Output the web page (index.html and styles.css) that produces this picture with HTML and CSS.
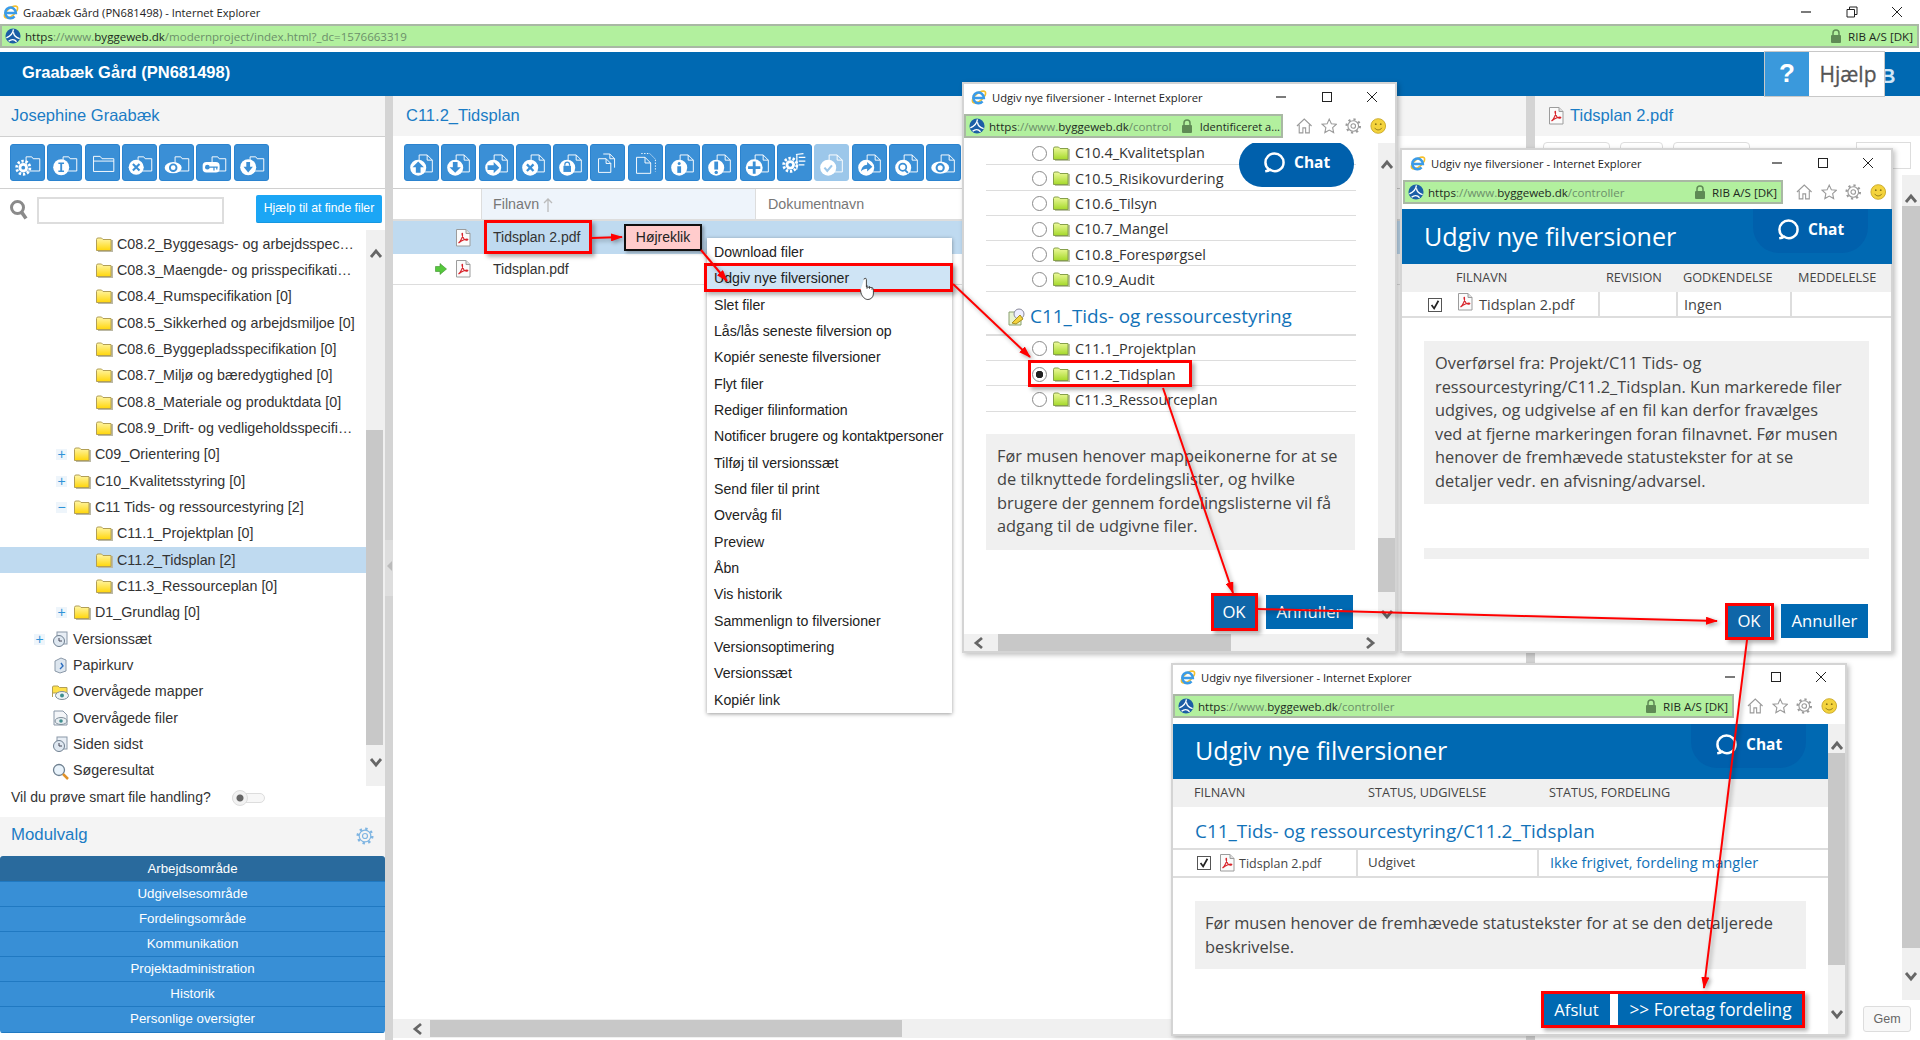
FILE: index.html
```html
<!DOCTYPE html>
<html lang="da">
<head>
<meta charset="utf-8">
<title>Graabæk Gård (PN681498) - Internet Explorer</title>
<link rel="stylesheet" href="styles.css">
</head>
<body>
<svg class="defs" aria-hidden="true">
  <defs>
    <linearGradient id="gy" x1="0" y1="0" x2="0" y2="1"><stop offset="0" stop-color="#fff6a8"/><stop offset="1" stop-color="#ffd60a"/></linearGradient>
    <linearGradient id="gg" x1="0" y1="0" x2="0" y2="1"><stop offset="0" stop-color="#eefa9c"/><stop offset="1" stop-color="#a5d92a"/></linearGradient>
    <marker id="ah" viewBox="0 0 12 8" refX="11" refY="4" markerWidth="12" markerHeight="8" markerUnits="userSpaceOnUse" orient="auto"><path d="M0 0L12 4L0 8z" fill="#f00"/></marker>
    <symbol id="ie" viewBox="0 0 18 18"><ellipse cx="9" cy="9" rx="9" ry="4.200" transform="rotate(-40 9 9)" fill="none" stroke="#f5c02c" stroke-width="1.800"/><path d="M3.500 10h11a6 6 0 1 0-1.500 4" fill="none" stroke="#3a9be8" stroke-width="2.800"/></symbol>
    <symbol id="bw" viewBox="0 0 18 18"><circle cx="9" cy="9" r="8.500" fill="#1c5ea6"/><path d="M9.500 1.500C9 6 6 9 1.500 11M9.500 5C10 9 12.500 11 16.500 12M4 15C7 12.500 10.500 12.500 13 15.500" fill="none" stroke="#fff" stroke-width="1.500"/></symbol>
    <symbol id="lock" viewBox="0 0 12 14"><rect x="1" y="6" width="10" height="8" rx="1" fill="#5f8a55"/><path d="M3 6.500V4a3 3 0 0 1 6 0v2.500" fill="none" stroke="#5f8a55" stroke-width="1.500"/></symbol>
    <symbol id="home" viewBox="0 0 18 18"><path d="M1 9L9 1.500L17 9M3.500 7.500V16.500H7.500V11H10.500V16.500H14.500V7.500" fill="none" stroke="#9a9a9a" stroke-width="1.200"/></symbol>
    <symbol id="star" viewBox="0 0 18 18"><path d="M9 1.500L11.300 6.500L16.800 7.100L12.700 10.800L13.800 16.200L9 13.500L4.200 16.200L5.300 10.800L1.200 7.100L6.700 6.500Z" fill="none" stroke="#9a9a9a" stroke-width="1.200"/></symbol>
    <symbol id="gear" viewBox="0 0 18 18"><circle cx="9" cy="9" r="5.800" fill="none" stroke="currentColor" stroke-width="1.200"/><circle cx="9" cy="9" r="7.300" fill="none" stroke="currentColor" stroke-width="2.400" stroke-dasharray="2.400 3.330"/><circle cx="9" cy="9" r="2.500" fill="none" stroke="currentColor" stroke-width="1.200"/></symbol>
    <symbol id="smile" viewBox="0 0 18 18"><circle cx="9" cy="9" r="8" fill="#f4d33c" stroke="#c9a92a"/><circle cx="6.300" cy="7" r="1" fill="#8a7415"/><circle cx="11.700" cy="7" r="1" fill="#8a7415"/><path d="M5 11c2 3 6 3 8 0" fill="none" stroke="#8a7415"/></symbol>
    <symbol id="chat" viewBox="0 0 22 22"><path d="M5 18C3 16.500 1.500 14 1.500 11A9 9 0 0 1 20.500 11A9 9 0 0 1 6.500 18.500C5 19.800 3.500 20.300 1.500 20.300C3.500 19.500 4.500 19 5 18Z" fill="none" stroke="#fff" stroke-width="2.600"/></symbol>
    <symbol id="pdf" viewBox="0 0 16 18"><path d="M1.500.5h9.500l4 4v12.500h-13.500z" fill="#fbfbfb" stroke="#9c9c9c"/><path d="M11 .5v4h4" fill="#ddd" stroke="#9c9c9c"/><path d="M3.500 14C6.500 11.500 8 7 7.500 4.500C7 3.500 6.300 6 9 10C10 11.500 13 11.300 12.800 10.300C12.300 9.300 7.500 10.500 3.500 14Z" fill="none" stroke="#d8232a" stroke-width="1.100"/></symbol>
    <symbol id="fy" viewBox="0 0 17 17"><rect x="2" y="4" width="15" height="12" fill="#bcb9a4"/><path d="M.5 5V3.500Q.5 2 2 2h3.500L7 3.500H15V14.500H.5Z" fill="url(#gy)" stroke="#b29f55"/></symbol>
    <symbol id="fg" viewBox="0 0 17 17"><rect x="2" y="4" width="15" height="12" fill="#bdc4a8"/><path d="M.5 5V3.500Q.5 2 2 2h3.500L7 3.500H15V14.500H.5Z" fill="url(#gg)" stroke="#86a04a"/></symbol>
    <symbol id="up" viewBox="0 0 14 14"><path d="M2 10L7 4L12 10" fill="none" stroke="#666" stroke-width="2.800"/></symbol>
    <symbol id="dn" viewBox="0 0 14 14"><path d="M2 4L7 10L12 4" fill="none" stroke="#666" stroke-width="2.800"/></symbol>
    <symbol id="lf" viewBox="0 0 14 14"><path d="M10 2L4 7L10 12" fill="none" stroke="#666" stroke-width="2.800"/></symbol>
    <symbol id="rt" viewBox="0 0 14 14"><path d="M4 2L10 7L4 12" fill="none" stroke="#666" stroke-width="2.800"/></symbol>
    <symbol id="tdoc" viewBox="0 0 35 37"><path d="M15 10.500h8.500l5.500 5.500v12.500H15z" fill="none" stroke="#fff"/><path d="M23.500 10.500V16H29" fill="none" stroke="#fff"/></symbol>
    <symbol id="tfol" viewBox="0 0 35 37"><path d="M16 12.500h6l1.500 2H30.500V27.500H16z" fill="none" stroke="#fff"/></symbol>
  </defs>
</svg>

<header class="titlebar">
  <svg class="ico16"><use href="#ie"/></svg>
  <span class="title-text main-title">Graabæk Gård (PN681498) - Internet Explorer</span>
  <div class="ctrls">
    <span class="ctrl"><svg class="ctrl-i" viewBox="0 0 12 12"><path d="M1 6H11" stroke="#222" stroke-width="1.200"/></svg></span>
    <span class="ctrl"><svg class="ctrl-i" viewBox="0 0 12 12"><path d="M1 3.500H8.500V11H1ZM3.500 3.500V1H11V8.500H8.500" fill="none" stroke="#222"/></svg></span>
    <span class="ctrl"><svg class="ctrl-i" viewBox="0 0 12 12"><path d="M1 1L11 11M11 1L1 11" stroke="#222"/></svg></span>
  </div>
</header>
<div class="addr addr-main">
  <svg class="ico16"><use href="#bw"/></svg>
  <span class="url"><b>https</b>://www.<b>byggeweb.dk</b>/modernproject/index.html?_dc=1576663319</span>
  <svg class="lock"><use href="#lock"/></svg>
  <span class="cert">RIB A/S [DK]</span>
</div>
<div class="app-head">
  <h1 class="app-title">Graabæk Gård (PN681498)</h1>
  <div class="help"><span class="help-q">?</span><span class="help-t">Hjælp</span></div>
  <span class="logo-b">B</span>
</div>

<main class="main">
  <aside class="side">
    <div class="band side-band">Josephine Graabæk</div>
    <div class="toolbar side-tools">
      <span class="tb"><svg viewBox="0 0 35 37"><use href="#tfol"/><circle cx="13" cy="24" r="7" fill="none" stroke="#fff" stroke-width="3" stroke-dasharray="2.500 1.900"/><circle cx="13" cy="24" r="5" fill="#fff"/><circle cx="13" cy="24" r="2" fill="#3a8fd6"/></svg></span>
      <span class="tb"><svg viewBox="0 0 35 37"><use href="#tfol"/><circle cx="14" cy="23.500" r="8.500" fill="#fff"/><path d="M11 18.500h6v1.500h-2v7h2v1.500h-6V27h2v-7h-2z" fill="#3a8fd6"/></svg></span>
      <span class="tb"><svg viewBox="0 0 35 37"><path d="M8 12h7l2 2.500h12.500V28H8z" fill="none" stroke="#fff"/><path d="M8 17H29.500" stroke="#fff"/></svg></span>
      <span class="tb"><svg viewBox="0 0 35 37"><use href="#tfol"/><circle cx="14" cy="23.500" r="8" fill="#fff"/><path d="M10.500 20L17.500 27M17.500 20L10.500 27" stroke="#3a8fd6" stroke-width="2.200"/></svg></span>
      <span class="tb"><svg viewBox="0 0 35 37"><use href="#tfol"/><ellipse cx="14" cy="24" rx="9" ry="6" fill="#fff"/><circle cx="14" cy="24" r="3.500" fill="none" stroke="#3a8fd6" stroke-width="2"/></svg></span>
      <span class="tb"><svg viewBox="0 0 35 37"><use href="#tfol"/><rect x="6" y="18" width="18" height="11" rx="4" fill="#fff"/><circle cx="11" cy="23.500" r="2.500" fill="#3a8fd6"/><path d="M13 23.500H22M18 23.500V27M21 23.500V26" stroke="#3a8fd6" stroke-width="1.300"/></svg></span>
      <span class="tb"><svg viewBox="0 0 35 37"><use href="#tfol"/><circle cx="14" cy="23.500" r="8.500" fill="#fff"/><path d="M12 18h4v5h3l-5 6-5-6h3z" fill="#3a8fd6"/></svg></span>
    </div>
    <div class="search-row">
      <svg class="search-i" viewBox="0 0 18 20"><circle cx="7.500" cy="7.500" r="6" fill="none" stroke="#8a8a8a" stroke-width="3"/><path d="M11.500 12L16 18.500" stroke="#8a8a8a" stroke-width="3.600"/></svg>
      <span class="search-in"></span>
      <span class="search-btn">Hjælp til at finde filer</span>
    </div>
    <div class="tree-wrap">
      <ul class="tree">
        <li class="node l2"><svg class="fi"><use href="#fy"/></svg>C08.2_Byggesags- og arbejdsspec…</li>
        <li class="node l2"><svg class="fi"><use href="#fy"/></svg>C08.3_Maengde- og prisspecifikati…</li>
        <li class="node l2"><svg class="fi"><use href="#fy"/></svg>C08.4_Rumspecifikation [0]</li>
        <li class="node l2"><svg class="fi"><use href="#fy"/></svg>C08.5_Sikkerhed og arbejdsmiljoe [0]</li>
        <li class="node l2"><svg class="fi"><use href="#fy"/></svg>C08.6_Byggepladsspecifikation [0]</li>
        <li class="node l2"><svg class="fi"><use href="#fy"/></svg>C08.7_Miljø og bæredygtighed [0]</li>
        <li class="node l2"><svg class="fi"><use href="#fy"/></svg>C08.8_Materiale og produktdata [0]</li>
        <li class="node l2"><svg class="fi"><use href="#fy"/></svg>C08.9_Drift- og vedligeholdsspecifi…</li>
        <li class="node l1"><span class="tog">+</span><svg class="fi"><use href="#fy"/></svg>C09_Orientering [0]</li>
        <li class="node l1"><span class="tog">+</span><svg class="fi"><use href="#fy"/></svg>C10_Kvalitetsstyring [0]</li>
        <li class="node l1"><span class="tog">−</span><svg class="fi"><use href="#fy"/></svg>C11 Tids- og ressourcestyring [2]</li>
        <li class="node l2"><svg class="fi"><use href="#fy"/></svg>C11.1_Projektplan [0]</li>
        <li class="node l2 sel"><svg class="fi"><use href="#fy"/></svg>C11.2_Tidsplan [2]</li>
        <li class="node l2"><svg class="fi"><use href="#fy"/></svg>C11.3_Ressourceplan [0]</li>
        <li class="node l1"><span class="tog">+</span><svg class="fi"><use href="#fy"/></svg>D1_Grundlag [0]</li>
        <li class="node l0"><span class="tog">+</span><svg class="fi" viewBox="0 0 17 17"><rect x="5" y="1" width="10" height="12" fill="#e8eef5" stroke="#8a98a8"/><circle cx="7" cy="10" r="5.500" fill="#dfe8f1" stroke="#6f7f90"/><path d="M7 7V10H10" fill="none" stroke="#445"/></svg>Versionssæt</li>
        <li class="node l0"><svg class="fi" viewBox="0 0 17 17"><path d="M3 4L9 1L14 3V14L8 16L3 14Z" fill="#dde6ef" stroke="#8a98a8"/><path d="M9 6L11 9L8 12" fill="none" stroke="#2e6fc0" stroke-width="1.400"/></svg>Papirkurv</li>
        <li class="node l0"><svg class="fi" viewBox="0 0 17 17"><path d="M.5 13V3Q.5 2 2 2h4l1.500 1.500H15V9H.5Z" fill="#ffe14a" stroke="#b29f55"/><ellipse cx="10" cy="11.500" rx="6.500" ry="4" fill="#eef3f6" stroke="#7f8e9a"/><circle cx="10" cy="11.500" r="2" fill="#3f8f8f"/></svg>Overvågede mapper</li>
        <li class="node l0"><svg class="fi" viewBox="0 0 17 17"><path d="M2 1H11L15 5V15H2Z" fill="#f3f5f8" stroke="#8a98a8"/><ellipse cx="9" cy="11" rx="6" ry="3.500" fill="#e8eef2" stroke="#7f8e9a"/><circle cx="9" cy="11" r="1.800" fill="#3f8f8f"/></svg>Overvågede filer</li>
        <li class="node l0"><svg class="fi" viewBox="0 0 17 17"><rect x="5" y="1" width="10" height="12" fill="#e8eef5" stroke="#8a98a8"/><circle cx="7" cy="10" r="5.500" fill="#dfe8f1" stroke="#6f7f90"/><path d="M7 7V10H10" fill="none" stroke="#445"/></svg>Siden sidst</li>
        <li class="node l0"><svg class="fi" viewBox="0 0 17 17"><circle cx="7" cy="7" r="5.500" fill="#e9f3fb" stroke="#6f8090" stroke-width="1.300"/><path d="M11 11L16 16" stroke="#e0922a" stroke-width="2.500"/></svg>Søgeresultat</li>
      </ul>
      <div class="vbar tree-bar">
        <svg class="arrow"><use href="#up"/></svg>
        <span class="track"><span class="thumb thumb-tree"></span></span>
        <svg class="arrow"><use href="#dn"/></svg>
      </div>
    </div>
    <div class="smart"><span>Vil du prøve smart file handling?</span><span class="switch"><span class="knob"></span></span></div>
    <div class="band mod-band"><span>Modulvalg</span><svg class="mod-gear"><use href="#gear"/></svg></div>
    <nav class="modules">
      <a class="mod cur">Arbejdsområde</a>
      <a class="mod">Udgivelsesområde</a>
      <a class="mod">Fordelingsområde</a>
      <a class="mod">Kommunikation</a>
      <a class="mod">Projektadministration</a>
      <a class="mod">Historik</a>
      <a class="mod">Personlige oversigter</a>
    </nav>
  </aside>

  <div class="split"><span class="split-h"></span></div>

  <section class="center">
    <div class="band center-band">C11.2_Tidsplan</div>
    <div class="toolbar center-tools">
      <span class="tb"><svg viewBox="0 0 35 37"><use href="#tdoc"/><circle cx="14" cy="24" r="8.500" fill="#fff"/><path d="M14 17.500l6 6h-3.500v6h-5v-6H8z" fill="#3a8fd6"/></svg></span>
      <span class="tb"><svg viewBox="0 0 35 37"><use href="#tdoc"/><circle cx="14" cy="24" r="8.500" fill="#fff"/><path d="M11.500 18h5v5.500H20l-6 6-6-6h3.500z" fill="#3a8fd6"/></svg></span>
      <span class="tb"><svg viewBox="0 0 35 37"><use href="#tdoc"/><circle cx="14" cy="24" r="8.500" fill="#fff"/><path d="M20.500 24l-6 6v-3.500H8v-5h6.500V18z" fill="#3a8fd6"/></svg></span>
      <span class="tb"><svg viewBox="0 0 35 37"><use href="#tdoc"/><circle cx="14" cy="24" r="8.500" fill="#fff"/><path d="M10.500 20.500l7 7M17.500 20.500l-7 7" stroke="#3a8fd6" stroke-width="2.400"/></svg></span>
      <span class="tb"><svg viewBox="0 0 35 37"><use href="#tdoc"/><circle cx="14" cy="24" r="8.500" fill="#fff"/><rect x="10" y="22" width="8" height="6.500" fill="#3a8fd6"/><path d="M11.500 22v-1.500a2.500 2.500 0 0 1 5 0V22" fill="none" stroke="#3a8fd6" stroke-width="1.300"/></svg></span>
      <span class="tb"><svg viewBox="0 0 35 37"><path d="M13 9.500h7l5 5V24M8 14.500h8l5 5V29H8z" fill="none" stroke="#fff"/><path d="M16 14.500v5h5M20 9.500v5h5" fill="none" stroke="#fff"/></svg></span>
      <span class="tb"><svg viewBox="0 0 35 37"><path d="M8 13h9l6 6v11H8zM17 13v6h6" fill="none" stroke="#fff"/><path d="M13 9h9l6 6v13" fill="none" stroke="#fff" stroke-dasharray="1.500 1.500"/></svg></span>
      <span class="tb"><svg viewBox="0 0 35 37"><use href="#tdoc"/><circle cx="14" cy="24" r="8.500" fill="#fff"/><circle cx="14" cy="19.500" r="1.600" fill="#3a8fd6"/><rect x="12" y="22.500" width="4" height="7" fill="#3a8fd6"/></svg></span>
      <span class="tb"><svg viewBox="0 0 35 37"><use href="#tdoc"/><circle cx="14" cy="24" r="8.500" fill="#fff"/><rect x="12" y="17.500" width="4" height="8.500" fill="#3a8fd6"/><circle cx="14" cy="29" r="1.800" fill="#3a8fd6"/></svg></span>
      <span class="tb"><svg viewBox="0 0 35 37"><use href="#tdoc"/><circle cx="14" cy="24" r="9" fill="#fff"/><path d="M7.500 24h13M14 17.500v13" stroke="#3a8fd6" stroke-width="3"/></svg></span>
      <span class="tb"><svg viewBox="0 0 35 37"><path d="M19 10l8-1M22 13h7M22 17h7M22 21h6M20 10V26" fill="none" stroke="#fff" stroke-width="1.300"/><circle cx="13" cy="21" r="7" fill="none" stroke="#fff" stroke-width="3" stroke-dasharray="2.500 1.900"/><circle cx="13" cy="21" r="5" fill="#fff"/><circle cx="13" cy="21" r="2" fill="#3a8fd6"/></svg></span>
      <span class="tb off"><svg viewBox="0 0 35 37"><use href="#tdoc"/><circle cx="14" cy="24" r="8.500" fill="#fff"/><path d="M10 24l3 3.500 5-6" fill="none" stroke="#9cc7ea" stroke-width="2.200"/></svg></span>
      <span class="tb"><svg viewBox="0 0 35 37"><use href="#tdoc"/><circle cx="14" cy="24" r="8.500" fill="#fff"/><path d="M15 18l5.500 5-5.500 5v-3c-3 0-5 1-6.500 3 .5-4 3-7 6.500-7z" fill="#3a8fd6"/></svg></span>
      <span class="tb"><svg viewBox="0 0 35 37"><use href="#tdoc"/><circle cx="14" cy="24" r="8.500" fill="#fff"/><circle cx="13.500" cy="23.500" r="3.800" fill="none" stroke="#3a8fd6" stroke-width="1.800"/><path d="M16 26.500l3 3" stroke="#3a8fd6" stroke-width="2"/></svg></span>
      <span class="tb"><svg viewBox="0 0 35 37"><use href="#tdoc"/><ellipse cx="14" cy="24" rx="9.500" ry="6.500" fill="#fff"/><circle cx="14" cy="24" r="3.800" fill="none" stroke="#3a8fd6" stroke-width="2.200"/></svg></span>
    </div>
    <div class="thead">
      <span class="th th0"></span>
      <span class="th th1">Filnavn <svg class="sort" viewBox="0 0 10 14"><path d="M5 14V1M1 5L5 1L9 5" fill="none" stroke="#bbb" stroke-width="1.300"/></svg></span>
      <span class="th th2">Dokumentnavn</span>
    </div>
    <div class="trow sel">
      <span class="td0"><svg class="pdf"><use href="#pdf"/></svg></span><span class="td1">Tidsplan 2.pdf</span>
    </div>
    <div class="trow">
      <span class="td0"><svg class="green" viewBox="0 0 12 12"><path d="M5 .5L11.500 6L5 11.500V8.500H.5v-5H5z" fill="#55c83c" stroke="#3d8f2b" stroke-width=".6"/></svg><svg class="pdf"><use href="#pdf"/></svg></span><span class="td1">Tidsplan.pdf</span>
    </div>
    <div class="hbar center-h">
      <svg class="arrow-h"><use href="#lf"/></svg>
      <span class="hthumb"></span>
    </div>
  </section>

  <div class="split split2"></div>

  <section class="right">
    <div class="band right-band"><svg class="pdf-big"><use href="#pdf"/></svg>Tidsplan 2.pdf</div>
    <div class="rp-tabs"><span class="rp-tab t1"></span><span class="rp-tab t2"></span><span class="rp-tab t3"></span><span class="rp-box"></span></div>
    <div class="rp-body">
      <div class="vbar rp-bar">
        <svg class="arrow"><use href="#up"/></svg>
        <span class="track"><span class="thumb thumb-rp"></span></span>
        <svg class="arrow"><use href="#dn"/></svg>
      </div>
    </div>
    <div class="rp-foot"><span class="gem">Gem</span></div>
  </section>
</main>

<!-- context menu -->
<ul class="ctx">
  <li>Download filer</li>
  <li class="hot">Udgiv nye filversioner</li>
  <li>Slet filer</li>
  <li>Lås/lås seneste filversion op</li>
  <li>Kopiér seneste filversioner</li>
  <li>Flyt filer</li>
  <li>Rediger filinformation</li>
  <li>Notificer brugere og kontaktpersoner</li>
  <li>Tilføj til versionssæt</li>
  <li>Send filer til print</li>
  <li>Overvåg fil</li>
  <li>Preview</li>
  <li>Åbn</li>
  <li>Vis historik</li>
  <li>Sammenlign to filversioner</li>
  <li>Versionsoptimering</li>
  <li>Versionssæt</li>
  <li>Kopiér link</li>
</ul>

<!-- popup A -->
<article class="win win-a">
  <div class="w-title">
    <svg class="ico16"><use href="#ie"/></svg>
    <span class="title-text">Udgiv nye filversioner - Internet Explorer</span>
    <div class="ctrls">
      <span class="ctrl"><svg class="ctrl-i" viewBox="0 0 12 12"><path d="M1 6H11" stroke="#222" stroke-width="1.200"/></svg></span>
      <span class="ctrl"><svg class="ctrl-i" viewBox="0 0 12 12"><rect x="1.500" y="1.500" width="9" height="9" fill="none" stroke="#222"/></svg></span>
      <span class="ctrl"><svg class="ctrl-i" viewBox="0 0 12 12"><path d="M1 1L11 11M11 1L1 11" stroke="#222"/></svg></span>
    </div>
  </div>
  <div class="w-addr">
    <div class="addr addr-a">
      <svg class="ico16"><use href="#bw"/></svg>
      <span class="url"><b>https</b>://www.<b>byggeweb.dk</b>/control</span>
      <svg class="lock"><use href="#lock"/></svg>
      <span class="cert">Identificeret a...</span>
    </div>
    <div class="ie-tools"><svg class="ie-t"><use href="#home"/></svg><svg class="ie-t"><use href="#star"/></svg><svg class="ie-t ie-g"><use href="#gear"/></svg><svg class="ie-t"><use href="#smile"/></svg></div>
  </div>
  <div class="w-body">
    <div class="w-content">
      <div class="a-list">
        <div class="pick"><span class="radio"></span><svg class="fi"><use href="#fg"/></svg>C10.4_Kvalitetsplan</div>
        <div class="pick"><span class="radio"></span><svg class="fi"><use href="#fg"/></svg>C10.5_Risikovurdering</div>
        <div class="pick"><span class="radio"></span><svg class="fi"><use href="#fg"/></svg>C10.6_Tilsyn</div>
        <div class="pick"><span class="radio"></span><svg class="fi"><use href="#fg"/></svg>C10.7_Mangel</div>
        <div class="pick"><span class="radio"></span><svg class="fi"><use href="#fg"/></svg>C10.8_Forespørgsel</div>
        <div class="pick"><span class="radio"></span><svg class="fi"><use href="#fg"/></svg>C10.9_Audit</div>
        <h2 class="a-head"><svg class="a-head-i" viewBox="0 0 18 18"><path d="M1 4H13V17H1Z" fill="#e8f3d0" stroke="#8aa070"/><circle cx="11" cy="6" r="5" fill="#eef" stroke="#889"/><path d="M4 15L12 7L15 11L8 16Z" fill="#f4d33c" stroke="#a88f20"/></svg>C11_Tids- og ressourcestyring</h2>
        <div class="pick"><span class="radio"></span><svg class="fi"><use href="#fg"/></svg>C11.1_Projektplan</div>
        <div class="pick"><span class="radio on"></span><svg class="fi"><use href="#fg"/></svg>C11.2_Tidsplan</div>
        <div class="pick"><span class="radio"></span><svg class="fi"><use href="#fg"/></svg>C11.3_Ressourceplan</div>
      </div>
      <p class="info a-info">Før musen henover mappeikonerne for at se de tilknyttede fordelingslister, og hvilke brugere der gennem fordelingslisterne vil få adgang til de udgivne filer.</p>
      <div class="btns a-btns"><span class="btn ok">OK</span><span class="btn">Annuller</span></div>
      <span class="chat a-chat"><svg class="chat-i"><use href="#chat"/></svg>Chat</span>
    </div>
    <div class="vbar w-bar">
      <svg class="arrow"><use href="#up"/></svg>
      <span class="track"><span class="thumb thumb-a"></span></span>
      <svg class="arrow"><use href="#dn"/></svg>
    </div>
  </div>
  <div class="hbar a-h">
    <svg class="arrow-h"><use href="#lf"/></svg>
    <span class="hthumb"></span>
    <svg class="arrow-h"><use href="#rt"/></svg>
  </div>
</article>

<!-- popup B -->
<article class="win win-b">
  <div class="w-title">
    <svg class="ico16"><use href="#ie"/></svg>
    <span class="title-text">Udgiv nye filversioner - Internet Explorer</span>
    <div class="ctrls">
      <span class="ctrl"><svg class="ctrl-i" viewBox="0 0 12 12"><path d="M1 6H11" stroke="#222" stroke-width="1.200"/></svg></span>
      <span class="ctrl"><svg class="ctrl-i" viewBox="0 0 12 12"><rect x="1.500" y="1.500" width="9" height="9" fill="none" stroke="#222"/></svg></span>
      <span class="ctrl"><svg class="ctrl-i" viewBox="0 0 12 12"><path d="M1 1L11 11M11 1L1 11" stroke="#222"/></svg></span>
    </div>
  </div>
  <div class="w-addr">
    <div class="addr addr-b">
      <svg class="ico16"><use href="#bw"/></svg>
      <span class="url"><b>https</b>://www.<b>byggeweb.dk</b>/controller</span>
      <svg class="lock"><use href="#lock"/></svg>
      <span class="cert">RIB A/S [DK]</span>
    </div>
    <div class="ie-tools"><svg class="ie-t"><use href="#home"/></svg><svg class="ie-t"><use href="#star"/></svg><svg class="ie-t ie-g"><use href="#gear"/></svg><svg class="ie-t"><use href="#smile"/></svg></div>
  </div>
  <div class="w-head"><h2>Udgiv nye filversioner</h2><span class="chat"><svg class="chat-i"><use href="#chat"/></svg>Chat</span></div>
  <div class="cols cols-b"><span>FILNAVN</span><span>REVISION</span><span>GODKENDELSE</span><span>MEDDELELSE</span></div>
  <div class="frow frow-b">
    <span class="fc fc1"><span class="chk"><svg viewBox="0 0 14 14"><path d="M3 7L6 11L11 2" fill="none" stroke="#222" stroke-width="2"/></svg></span><svg class="pdf pdf-b"><use href="#pdf"/></svg>Tidsplan 2.pdf</span>
    <span class="fc fc2"></span><span class="fc fc3">Ingen</span><span class="fc fc4"></span>
  </div>
  <p class="info b-info">Overførsel fra: Projekt/C11 Tids- og ressourcestyring/C11.2_Tidsplan. Kun markerede filer udgives, og udgivelse af en fil kan derfor fravælges ved at fjerne markeringen foran filnavnet. Før musen henover de fremhævede statustekster for at se detaljer vedr. en afvisning/advarsel.</p>
  <div class="b-bar"></div>
  <div class="btns b-btns"><span class="btn ok">OK</span><span class="btn">Annuller</span></div>
</article>

<!-- popup C -->
<article class="win win-c">
  <div class="w-title">
    <svg class="ico16"><use href="#ie"/></svg>
    <span class="title-text">Udgiv nye filversioner - Internet Explorer</span>
    <div class="ctrls">
      <span class="ctrl"><svg class="ctrl-i" viewBox="0 0 12 12"><path d="M1 6H11" stroke="#222" stroke-width="1.200"/></svg></span>
      <span class="ctrl"><svg class="ctrl-i" viewBox="0 0 12 12"><rect x="1.500" y="1.500" width="9" height="9" fill="none" stroke="#222"/></svg></span>
      <span class="ctrl"><svg class="ctrl-i" viewBox="0 0 12 12"><path d="M1 1L11 11M11 1L1 11" stroke="#222"/></svg></span>
    </div>
  </div>
  <div class="w-addr">
    <div class="addr addr-c">
      <svg class="ico16"><use href="#bw"/></svg>
      <span class="url"><b>https</b>://www.<b>byggeweb.dk</b>/controller</span>
      <svg class="lock"><use href="#lock"/></svg>
      <span class="cert">RIB A/S [DK]</span>
    </div>
    <div class="ie-tools"><svg class="ie-t"><use href="#home"/></svg><svg class="ie-t"><use href="#star"/></svg><svg class="ie-t ie-g"><use href="#gear"/></svg><svg class="ie-t"><use href="#smile"/></svg></div>
  </div>
  <div class="w-body c-body">
    <div class="w-content">
      <div class="w-head"><h2>Udgiv nye filversioner</h2><span class="chat"><svg class="chat-i"><use href="#chat"/></svg>Chat</span></div>
      <div class="cols cols-c"><span>FILNAVN</span><span>STATUS, UDGIVELSE</span><span>STATUS, FORDELING</span></div>
      <h3 class="c-path">C11_Tids- og ressourcestyring/C11.2_Tidsplan</h3>
      <div class="frow frow-c">
        <span class="fc cc1"><span class="chk"><svg viewBox="0 0 14 14"><path d="M3 7L6 11L11 2" fill="none" stroke="#222" stroke-width="2"/></svg></span><svg class="pdf pdf-c"><use href="#pdf"/></svg>Tidsplan 2.pdf</span>
        <span class="fc cc2">Udgivet</span><span class="fc cc3">Ikke frigivet, fordeling mangler</span>
      </div>
      <p class="info c-info">Før musen henover de fremhævede statustekster for at se den detaljerede beskrivelse.</p>
      <div class="btns c-btns"><span class="btn b-afslut">Afslut</span><span class="btn b-foretag">&gt;&gt; Foretag fordeling</span></div>
    </div>
    <div class="vbar w-bar">
      <svg class="arrow"><use href="#up"/></svg>
      <span class="track"><span class="thumb thumb-c"></span></span>
      <svg class="arrow"><use href="#dn"/></svg>
    </div>
  </div>
</article>

<!-- annotations -->
<span class="hl hl-file"></span>
<span class="hl hl-menu"></span>
<span class="hl hl-tid"></span>
<span class="hl hl-oka"></span>
<span class="hl hl-okb"></span>
<span class="hl hl-c"></span>
<span class="hoj">Højreklik</span>
<svg class="cursor" viewBox="0 0 14 24"><path d="M4 2.500a1.200 1.200 0 0 1 2.400 0V10l5 .5c1.500.3 2 1.500 2 3v3.500c0 3-2.500 5.500-5.500 5.500S2.500 20 1 16L.5 13" fill="#fff" stroke="#333" stroke-width=".9"/><path d="M7 8V12M9.500 9V12M12 10V13" stroke="#333" stroke-width=".7"/></svg>
<svg class="arrows" viewBox="0 0 1920 1040">
  <g class="arrow-lines">
    <path d="M592 238L622 237" marker-end="url(#ah)"/>
    <path d="M701 250L727 281" marker-end="url(#ah)"/>
    <path d="M953 284L1030 357" marker-end="url(#ah)"/>
    <path d="M1163 388L1233 593" marker-end="url(#ah)"/>
    <path d="M1258 609L1717 621" marker-end="url(#ah)"/>
    <path d="M1747 640L1704 988" marker-end="url(#ah)"/>
  </g>
</svg>
</body>
</html>
```
FILE: styles.css
```css
* { box-sizing: border-box; }
html, body { margin: 0; padding: 0; }
body {
  width: 1920px; height: 1040px; overflow: hidden; position: relative;
  background: #fff; color: #222;
  font: 14px/1.2 "Liberation Sans", Arial, sans-serif;
  display: flex; flex-direction: column;
}
h1, h2, h3, p, ul { margin: 0; padding: 0; font-weight: normal; }
ul { list-style: none; }
.defs { position: absolute; width: 0; height: 0; }
.ico16 { width: 16px; height: 16px; flex: none; }

/* browser chrome */
.titlebar { height: 24px; display: flex; align-items: center; padding-left: 3px; flex: none; }
.title-text { font: 11.200px "Open Sans", sans-serif; color: #222; margin-left: 5px; white-space: nowrap; }
.main-title { margin-left: 4px; }
.ctrls { margin-left: auto; display: flex; }
.ctrl { width: 45.500px; display: flex; justify-content: center; align-items: center; }
.ctrl-i { width: 12px; height: 12px; }
.addr {
  height: 24px; flex: none; display: flex; align-items: center;
  background: #b2f09e; border: 2px solid #a9b8a4; padding: 0 4px 0 3px;
}
.addr-main { margin: 0 1px 0 0; }
.url { font: 11.550px "Open Sans", sans-serif; color: #6c8f6a; margin-left: 4px; white-space: nowrap; }
.url b { font-weight: normal; color: #1e2a1e; }
.cert { font: 11.600px "Open Sans", sans-serif; color: #1e2a1e; white-space: nowrap; margin-left: 6px; }
.lock { width: 12px; height: 14px; margin-left: auto; flex: none; }

.app-head {
  height: 44px; margin-top: 4px; background: #0069b2; flex: none;
  display: flex; align-items: center; position: relative; padding-left: 22px;
}
.app-title { color: #fff; font-size: 16.500px; font-weight: bold; padding-bottom: 2px; }
.help { margin-left: auto; margin-right: 36px; display: flex; height: 44px; box-shadow: 0 0 0 1px #c8c8c8; position: relative; z-index: 1; }
.help-q { width: 44px; background: #3a99dc; color: #fff; font-weight: bold; font-size: 26px; display: flex; align-items: center; justify-content: center; }
.help-t { width: 75px; background: #fff; color: #555; font: 21px "Open Sans", sans-serif; text-align: center; line-height: 44px; padding-left: 3px; -webkit-text-stroke: .3px #555; }
.logo-b { position: absolute; left: 1881px; top: 12px; color: #cfe6f7; font-weight: bold; font-size: 20px; }

/* main layout */
.main { flex: 1; display: flex; min-height: 0; }
.band { height: 40px; background: #f4f4f4; display: flex; align-items: center; color: #1b7cc5; font-size: 16.500px; flex: none; }
.side { width: 385px; flex: none; display: flex; flex-direction: column; }
.side-band { padding-left: 11px; border-bottom: 1px solid #d0d0d0; height: 41px; }
.toolbar { display: flex; gap: 2.300px; flex: none; }
.side-tools { height: 52px; padding: 7px 0 0 10px; border-bottom: 1px solid #d0d0d0; }
.tb { width: 35px; height: 37px; background: #3a8fd6; border: 1px solid #2b83cf; border-radius: 3px; display: block; flex: none; }
.tb svg { width: 33px; height: 35px; display: block; }
.tb.off { background: #9cc7ea; border-color: #9cc7ea; }
.search-row { height: 41px; display: flex; align-items: flex-start; padding: 8px 3px 0 10px; flex: none; }
.search-i { width: 18px; height: 20px; margin-top: 3px; }
.search-in { width: 187px; height: 27px; border: 2px solid #ddd; margin-left: 9px; }
.search-btn { width: 126px; height: 28px; margin-left: auto; margin-top: -2px; background: #1ba6f5; color: #fff; font-size: 12.200px; border-radius: 2px; text-align: center; line-height: 26px; white-space: nowrap; border-bottom: 1px solid #1697e0; }
.tree-wrap { height: 556px; display: flex; flex: none; }
.tree { flex: 1; min-width: 0; padding-top: 1px; }
.node { height: 26.350px; display: flex; align-items: center; white-space: nowrap; color: #333; font-size: 14.300px; position: relative; }
.node .fi { width: 17px; height: 17px; margin-right: 4px; flex: none; }
.l2 { padding-left: 96px; }
.l1 { padding-left: 74px; }
.l0 { padding-left: 52px; }
.node.sel { background: #bfdaf0; }
.tog { position: absolute; width: 11px; height: 11px; background: #eef5fb; color: #2f93d8; font-size: 14px; line-height: 11px; text-align: center; }
.l1 .tog { left: 56px; }
.l0 .tog { left: 34px; }

.vbar { display: flex; flex-direction: column; background: #f0f0f0; flex: none; align-items: center; }
.arrow { width: 14px; height: 14px; flex: none; }
.track { flex: 1; width: 100%; min-height: 0; display: block; }
.thumb { display: block; background: #c8c8c8; }
.tree-bar { width: 19px; padding: 17px 0; }
.thumb-tree { height: 315px; margin-top: 169px; width: 17px; }
.smart { height: 31px; padding: 0 0 8px 11px; display: flex; align-items: center; flex: none; font-size: 14px; color: #333; }
.switch { width: 33px; height: 10px; border: 1px solid #ddd; border-radius: 6px; margin-left: 21px; position: relative; background: #f7f7f7; }
.knob { position: absolute; left: -1px; top: -4px; width: 16px; height: 16px; border-radius: 50%; background: radial-gradient(circle, #666 0 3px, #f2f2f2 4px); border: 1px solid #ddd; }
.mod-band { height: 39px; padding: 0 11px 2px; justify-content: space-between; font-size: 16.800px; }
.mod-gear { width: 18px; height: 18px; color: #7fb5e2; }
.modules { border-radius: 3px; overflow: hidden; flex: none; }
.mod { display: block; height: 25.200px; background: #388fd6; color: #fff; text-align: center; line-height: 24px; font-size: 13.300px; border-bottom: 1px solid #2079c2; }
.mod.cur { background: #296a9d; height: 25.500px; line-height: 25px; }

.split { width: 8px; flex: none; background: #d4d4d4; position: relative; }
.split-h { position: absolute; left: 0; top: 444px; height: 56px; width: 8px; background: #dedede; }
.split-h::after { content: ""; position: absolute; left: 2px; top: 21px; border: 5px solid transparent; border-right-color: #bbb; border-left: 0; }
.split2 { width: 9px; }

.center { flex: 1; min-width: 0; display: flex; flex-direction: column; position: relative; }
.center-band { padding-left: 13px; }
.center-tools { height: 53px; padding: 8px 0 0 11px; border-bottom: 1px solid #ccc; }
.thead { height: 32px; display: flex; border-bottom: 2px solid #ddd; color: #777; flex: none; font-size: 14.300px; }
.th { display: flex; align-items: center; padding-top: 1px; }
.th0 { width: 88px; }
.th1 { width: 275px; background: #eef4fb; padding-left: 11px; border-left: 1px solid #ddd; border-right: 1px solid #ddd; }
.th2 { padding-left: 12px; }
.sort { width: 10px; height: 14px; margin-left: 4px; }
.trow { height: 33px; display: flex; align-items: center; }
.trow + .trow { height: 31px; border-bottom: 1px solid #ddd; }
.trow.sel { background: #bfdaf0; }
.td0 { width: 88px; display: flex; justify-content: flex-end; align-items: center; padding-right: 10px; }
.td1 { padding-left: 12px; color: #333; }
.pdf { width: 16px; height: 18px; flex: none; }
.green { width: 12px; height: 12px; margin-right: 8px; }
.hbar { display: flex; align-items: center; background: #f0f0f0; flex: none; }
.center-h { height: 19px; margin-top: auto; margin-bottom: 2px; padding-left: 18px; }
.arrow-h { width: 14px; height: 14px; flex: none; }
.center-h .hthumb { width: 472px; height: 17px; background: #c8c8c8; margin-left: 5px; }

.right { width: 385px; flex: none; display: flex; flex-direction: column; }
.right-band { padding-left: 13px; }
.pdf-big { width: 16px; height: 18px; margin-right: 6px; }
.rp-tabs { height: 39px; display: flex; padding: 6px 9px 0 8px; flex: none; }
.rp-tab { height: 30px; border: 1px solid #ddd; border-radius: 4px 4px 0 0; margin-right: 10px; }
.t1 { width: 67px; } .t2 { width: 43px; } .t3 { width: 77px; }
.rp-box { margin-left: auto; width: 55px; height: 27px; border: 1px solid #ddd; }
.rp-body { flex: 1; display: flex; justify-content: flex-end; min-height: 0; }
.rp-bar { width: 18px; padding: 17px 0; }
.thumb-rp { height: 742px; width: 18px; }
.rp-foot { height: 40px; display: flex; justify-content: flex-end; align-items: flex-start; padding: 6px 9px 0 0; flex: none; }
.gem { width: 48px; height: 26px; border: 1px solid #ddd; border-radius: 3px; background: #f8f8f8; text-align: center; line-height: 24px; font-size: 12.500px; color: #666; }

/* context menu */
.ctx { position: absolute; left: 707px; top: 238px; width: 245px; height: 475px; background: #fff; box-shadow: 0 1px 4px rgba(0,0,0,.4); padding-top: 1px; }
.ctx li { height: 26.330px; padding-left: 7px; line-height: 26px; color: #222; white-space: nowrap; font-size: 14.150px; }
.ctx .hot { background: #cfe4f5; }

/* popups */
.win { position: absolute; background: #fff; border: 2px solid #d4d4d4; box-shadow: 2px 2px 5px rgba(0,0,0,.25); display: flex; flex-direction: column; font-family: "Open Sans", sans-serif; }
.win-a { left: 962px; top: 82px; width: 435px; height: 571px; }
.win-b { left: 1400px; top: 148px; width: 493px; height: 505px; }
.win-c { left: 1171px; top: 663px; width: 676px; height: 373px; }
.w-title { height: 30px; display: flex; align-items: center; padding: 0 0 4px 7px; flex: none; }
.win-b .w-title { padding-left: 8px; }
.win-c .w-title { height: 29px; padding-bottom: 5px; }
.win-c .w-addr { height: 30px; }
.win-c .ctrls { margin-right: 1px; }
.w-addr { display: flex; flex: none; height: 29px; align-items: flex-start; }
.addr-a { width: 319px; margin-left: 0; padding-right: 1px; }
.addr-a .cert { font-size: 11.100px; margin-left: 7px; }
.addr-b { width: 380px; margin-left: 1px; }
.addr-c { width: 561px; }
.ie-tools { display: flex; gap: 8px; margin-left: 13px; padding-top: 3px; }
.ie-t { width: 16.500px; height: 18px; color: #9a9a9a; }
.w-body { flex: 1; display: flex; min-height: 0; }
.w-content { flex: 1; position: relative; min-width: 0; overflow: hidden; display: flex; flex-direction: column; }
.w-bar { width: 17px; padding: 15px 0 13px; }
.thumb-a { height: 54px; margin-top: 366px; }
.thumb-c { height: 212px; }
.a-list { margin: -3px 22px 0; }
.pick { height: 25.300px; border-bottom: 1px solid #ddd; display: flex; align-items: center; padding: 2px 0 0 46px; font-size: 14.450px; color: #333; white-space: nowrap; }
.pick .fi { width: 17px; height: 17px; margin-right: 5px; flex: none; }
.radio { width: 15px; height: 15px; border: 1px solid #8a8a8a; border-radius: 50%; margin-right: 6px; flex: none; background: #fff; }
.radio.on { background: radial-gradient(circle, #222 0 3.500px, #fff 4px); }
.a-head { height: 44px; border-bottom: 2px solid #ddd; font-size: 18.950px; color: #1272b8; display: flex; align-items: center; padding: 8px 0 0 22px; white-space: nowrap; }
.a-head-i { width: 18px; height: 18px; margin-right: 4px; flex: none; }
.info { background: #f0f0f0; color: #444; font-size: 16.350px; line-height: 23.600px; padding: 11px; flex: none; }
.a-info { margin: 22px 23px 0 22px; }
.btns { display: flex; justify-content: flex-end; gap: 11px; flex: none; }
.btn { background: #0069b2; color: #fff; height: 34px; font-size: 16.700px; line-height: 34px; text-align: center; width: 87px; white-space: nowrap; }
.a-btns { margin: 45px 25px 0 0; }
.btn.ok { width: 42px; background: #0f66a8; }
.chat { position: absolute; left: 351px; top: 0; width: 115px; height: 44px; background: #0060ac; border-radius: 0 0 26px 26px; color: #fff; font-weight: bold; font-size: 15.500px; display: flex; align-items: center; padding: 0 0 4px 25px; white-space: nowrap; }
.win-c .chat { left: 518px; }
.chat-i { width: 21px; height: 21px; margin-right: 9px; flex: none; }
.a-chat { left: 275px; border-radius: 26px; background: #0060ac; height: 46px; top: -2px; }
.w-head { height: 55px; background: #0069b2; position: relative; flex: none; }
.win-b .w-head { margin: 0 -1px 0 0; }
.w-head h2 { color: #fff; font-size: 25.100px; line-height: 54px; padding-left: 22px; white-space: nowrap; }
.win-c .w-head h2 { line-height: 52px; }
.cols { height: 28px; background: #f0f0f0; display: flex; align-items: center; font-size: 12.700px; color: #444; flex: none; white-space: nowrap; }
.cols span { position: relative; }
.cols-b { padding-left: 54px; }
.cols-b span:nth-child(1) { width: 150px; }
.cols-b span:nth-child(2) { width: 77px; }
.cols-b span:nth-child(3) { width: 115px; }
.frow { display: flex; height: 26px; border-bottom: 2px solid #ddd; flex: none; font-size: 14.500px; color: #444; }
.fc { display: flex; align-items: center; border-right: 2px solid #ddd; padding: 2px 0 0 6px; white-space: nowrap; }
.fc1 { width: 198px; padding-left: 26px; }
.fc2 { width: 78px; } .fc3 { width: 114px; } .fc4 { flex: 1; border-right: 0; }
.chk { width: 14px; height: 14px; border: 1px solid #555; display: block; flex: none; }
.chk svg { width: 12px; height: 12px; display: block; }
.pdf-b { margin: -6px 6px 0 15px; }
.b-info { margin: 23px 22px 0 22px; height: 163px; padding-right: 24px; }
.b-bar { height: 11px; margin: 44px 22px 0; background: #f0f0f0; flex: none; }
.b-btns { margin: 45px 23px 0 0; }
.cols-c { padding-left: 21px; }
.cols-c span:nth-child(1) { width: 174px; }
.cols-c span:nth-child(2) { width: 181px; }
.c-path { font-size: 18.900px; color: #1272b8; height: 43px; line-height: 48px; padding-left: 22px; border-bottom: 2px solid #ddd; white-space: nowrap; flex: none; }
.frow-c { height: 28px; font-size: 12.500px; }
.frow-c .fc { padding-top: 0; }
.cc1 { width: 185px; padding-left: 24px; }
.pdf-c { margin: 0 4px 0 8px; }
.frow-c .cc2 { width: 181px; padding-left: 10px; font-size: 13.300px; }
.frow-c .cc3 { flex: 1; border-right: 0; padding-left: 11px; color: #1272b8; font-size: 14.700px; }
.c-info { margin: 23px 22px 0 22px; height: 68px; padding: 11px 10px; }
.c-btns { margin: 24px 25px 0 0; gap: 8px; }
.btn.b-afslut { width: 67px; }
.btn.b-foretag { width: 185px; font-size: 17.300px; }
.a-h { height: 17px; margin-top: auto; padding: 0 18px 0 8px; }
.a-h .hthumb { width: 233px; height: 17px; background: #c8c8c8; margin-left: 12px; margin-right: auto; }

/* annotations */
.hl { position: absolute; border: 3px solid #f00; box-shadow: 3px 3px 4px rgba(0,0,0,.3); }
.hl-file { left: 484px; top: 220px; width: 108px; height: 34px; }
.hl-menu { left: 704px; top: 263px; width: 249px; height: 29px; }
.hl-tid { left: 1028px; top: 360px; width: 164px; height: 27px; }
.hl-oka { left: 1211px; top: 593px; width: 47px; height: 38px; }
.hl-okb { left: 1725px; top: 603px; width: 49px; height: 37px; }
.hl-c { left: 1541px; top: 991px; width: 264px; height: 37px; }
.hoj { position: absolute; left: 624px; top: 224px; width: 78px; height: 27px; background: #ffcccc; border: 2px solid #111; box-shadow: 2px 2px 3px rgba(0,0,0,.3); text-align: center; line-height: 23px; font-size: 14px; color: #222; }
.cursor { position: absolute; left: 860px; top: 277px; width: 14px; height: 24px; }
.arrows { position: absolute; left: 0; top: 0; width: 1920px; height: 1040px; pointer-events: none; }
.arrow-lines path { fill: none; stroke: #f00; stroke-width: 2; filter: drop-shadow(2px 2px 2px rgba(0,0,0,.35)); }
```
